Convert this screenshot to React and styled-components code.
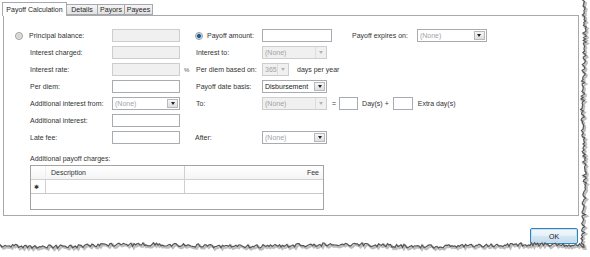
import React from 'react'
import styled, { createGlobalStyle } from 'styled-components'

const GlobalStyle = createGlobalStyle`
    html, body {
        margin: 0;
        padding: 0;
        background: #fff;
    }
    body {
        font-family: "Liberation Sans", Arial, sans-serif;
        font-size: 7px;
        color: #2e2e2e;
    }
`

// styling
    const Canvas = styled.div`
        position: relative;
        width: 590px;
        height: 257px;
        overflow: hidden;
        background: #fff;
    `

    const Dialog = styled.div`
        width: 584px;
        height: 246px;
        box-sizing: border-box;
        padding: 2px 0 0 3px;
        display: flex;
        flex-direction: column;
        background: #fff;
    `

    const TabStrip = styled.div`
        display: flex;
        align-items: flex-end;
        height: 13px;
        position: relative;
        z-index: 1;
    `

    const Tab = styled.div`
        width: ${ p => p.$w }px;
        height: ${ p => p.$active ? 14 : 11 }px;
        margin-bottom: ${ p => p.$active ? -1 : 0 }px;
        margin-left: ${ p => p.$active ? -1 : 0 }px;
        box-sizing: border-box;
        border: 1px solid #a7a9ae;
        border-bottom: ${ p => p.$active ? 'none' : '1px solid #a7a9ae' };
        border-left: ${ p => p.$first || p.$active ? '1px solid #a7a9ae' : 'none' };
        background: ${ p => p.$active ? '#fff' : 'linear-gradient(#f4f4f4, #e2e2e2)' };
        display: flex;
        align-items: center;
        justify-content: center;
        padding-bottom: ${ p => p.$active ? 1 : 0 }px;
        color: #262626;
        white-space: nowrap;
    `

    const TabPanel = styled.div`
        width: 576px;
        height: 201px;
        box-sizing: border-box;
        border: 1px solid #a7a9ae;
        padding: 13px 0 0 11px;
        background: #fff;
    `

    const FormGrid = styled.div`
        display: grid;
        grid-template-columns: 97px 68px 15px 67px 68px 1fr;
        grid-auto-rows: 13px;
        row-gap: 4px;
        align-items: center;
    `

    const Label = styled.div`
        display: flex;
        align-items: center;
        gap: ${ p => p.$gap || 6 }px;
        padding-left: ${ p => p.$indent || 0 }px;
        white-space: nowrap;
        color: #333;
    `

    const Radio = styled.span`
        width: 8px;
        height: 8px;
        box-sizing: border-box;
        border-radius: 50%;
        border: 1px solid #9b9b9b;
        background: ${ p => p.$checked
            ? 'radial-gradient(circle, #1f5d8c 0 1.6px, #8fc0e4 2.2px, #f0f6fb 3px)'
            : 'radial-gradient(circle, #d6d6d6 0 1.5px, #eeeeee 3px)' };
        flex-shrink: 0;
    `

    const Box = styled.div`
        width: ${ p => p.$w || 68 }px;
        height: 13px;
        box-sizing: border-box;
        border: 1px solid ${ p => p.$disabled ? '#cdcdcd' : '#a9abb2' };
        background: ${ p => p.$disabled ? '#f0f0f0' : '#fff' };
        margin-left: ${ p => p.$ml || 0 }px;
        flex-shrink: 0;
    `

    const Combo = styled.div`
        width: ${ p => p.$w || 65 }px;
        height: 13px;
        box-sizing: border-box;
        border: 1px solid ${ p => p.$disabled ? '#cdcdcd' : '#a9abb2' };
        background: ${ p => p.$disabled ? '#f0f0f0' : '#fff' };
        display: flex;
        margin-left: ${ p => p.$ml || 0 }px;
        flex-shrink: 0;
    `

    const ComboText = styled.span`
        flex: 1;
        padding-left: 2px;
        line-height: 11px;
        color: ${ p => p.$dark ? '#1a1a1a' : '#a3a3a3' };
        overflow: hidden;
        white-space: nowrap;
    `

    const ComboArrow = styled.span`
        width: 11px;
        box-sizing: border-box;
        margin: ${ p => p.$disabled ? 0 : 1 }px;
        border: ${ p => p.$disabled ? 'none' : '1px solid #b9b9b9' };
        border-left: 1px solid ${ p => p.$disabled ? '#dcdcdc' : '#b9b9b9' };
        background: ${ p => p.$disabled ? 'transparent' : 'linear-gradient(#f6f6f6, #dedede)' };
        display: flex;
        align-items: center;
        justify-content: center;

        &::after {
            content: '';
            border-left: 2.5px solid transparent;
            border-right: 2.5px solid transparent;
            border-top: 3px solid ${ p => p.$disabled ? '#b4b4b4' : '#202020' };
        }
    `

    const Inline = styled.div`
        display: flex;
        align-items: center;
        white-space: nowrap;
    `

    const Text = styled.span`
        margin-left: ${ p => p.$ml || 0 }px;
        color: #333;
        white-space: nowrap;
    `

    const Percent = styled.span`
        padding-left: 4px;
        color: #555;
        font-size: 6px;
    `

    const ChargesLabel = styled.div`
        margin: 10px 0 0 15px;
        height: 10px;
        line-height: 10px;
        color: #333;
    `

    const ChargesGrid = styled.div`
        margin: 1px 0 0 15px;
        width: 294px;
        height: 45px;
        box-sizing: border-box;
        border: 1px solid #a3a3a3;
        background: #fff;
    `

    const GridRow = styled.div`
        display: grid;
        grid-template-columns: 15px 139px 1fr;
        height: 14px;
        box-sizing: border-box;
        border-bottom: 1px solid ${ p => p.$header ? '#d0d0d0' : '#c8c8c8' };
        background: ${ p => p.$header ? 'linear-gradient(#ffffff, #f4f5f7)' : '#fff' };
    `

    const Cell = styled.div`
        display: flex;
        align-items: center;
        justify-content: ${ p => p.$align || 'flex-start' };
        padding: 0 ${ p => p.$pr || 0 }px 0 ${ p => p.$pl || 0 }px;
        border-right: ${ p => p.$last ? 'none' : `1px solid ${ p.$faint ? '#eeeeee' : '#d0d0d0' }` };
        color: #333;
        white-space: nowrap;
    `

    const NewRowMark = styled.span`
        font-family: "DejaVu Sans", sans-serif;
        font-size: 6px;
        color: #333;
        padding-left: 3px;
    `

    const Footer = styled.div`
        width: 576px;
        display: flex;
        justify-content: flex-end;
        padding: 12px 1px 0 0;
        box-sizing: border-box;
    `

    const OkButton = styled.button`
        width: 48px;
        height: 16px;
        box-sizing: border-box;
        border: 1px solid #3c7fb1;
        border-radius: 2px;
        background: linear-gradient(#f2f8fc 0%, #e4f0f8 50%, #d3e6f3 51%, #c5dcee 100%);
        box-shadow: inset 0 0 0 1px #bfe3f8;
        font-family: "Liberation Sans", Arial, sans-serif;
        font-size: 7px;
        color: #1a1a1a;
        padding: 0;
    `

    const EdgeLayer = styled.svg`
        position: absolute;
        left: 0;
        top: 0;
        pointer-events: none;
    `

const rnd = (i) => {
    const v = Math.sin(i * 12.9898 + 78.233) * 43758.5453
    return v - Math.floor(v)
}

const buildEdge = () => {
    const pts = []
    for (let i = 0, y = 0; y <= 245; i++, y += 1.5) {
        const x = 583.5 + Math.sin(y / 23) * 1.1 + (rnd(i) - 0.5) * 3.6
        pts.push([x, y])
    }
    for (let i = 0, x = 584; x >= -2; i++, x -= 1.5) {
        const y = 245.5 + Math.sin(x / 31) * 1.1 + (rnd(i + 700) - 0.5) * 3.6
        pts.push([x, y])
    }
    return pts
}

const TornEdge = () => {
    const pts = buildEdge()
    const line = pts.map(([x, y], i) => `${ i ? 'L' : 'M' }${ x.toFixed(1) } ${ y.toFixed(1) }`).join(' ')
    const outside = `${ line } L -2 257 L 590 257 L 590 0 Z`
    return (
        <EdgeLayer width="590" height="257" viewBox="0 0 590 257">
            <path d={ outside } fill="#fff" />
            <path d={ line } fill="none" stroke="#bdbdbd" strokeWidth="2.4" transform="translate(1.4 1.6)" />
            <path d={ line } fill="none" stroke="#545454" strokeWidth="1.2" />
        </EdgeLayer>
    )
}

const ComboBox = ({ w, text, disabled, dark, ml }) => (
    <Combo $w={ w } $disabled={ disabled } $ml={ ml }>
        <ComboText $dark={ dark }>{ text }</ComboText>
        <ComboArrow $disabled={ disabled } />
    </Combo>
)

const App = () => {

    return (
        <Canvas>
            <GlobalStyle />
            <Dialog>

                <TabStrip>
                    <Tab $w={ 65 } $active>Payoff Calculation</Tab>
                    <Tab $w={ 31 }>Details</Tab>
                    <Tab $w={ 27 }>Payors</Tab>
                    <Tab $w={ 28 }>Payees</Tab>
                </TabStrip>

                <TabPanel>
                    <FormGrid>

                        <Label><Radio />Principal balance:</Label>
                        <Box $disabled />
                        <span />
                        <Label $gap={ 4 }><Radio $checked />Payoff amount:</Label>
                        <Box $w={ 70 } />
                        <Inline>
                            <Text $ml={ 22 }>Payoff expires on:</Text>
                            <ComboBox w={ 70 } ml={ 9 } text="(None)" />
                        </Inline>

                        <Label $indent={ 15 }>Interest charged:</Label>
                        <Box $disabled />
                        <span />
                        <Label $indent={ 1 }>Interest to:</Label>
                        <ComboBox w={ 65 } text="(None)" disabled />
                        <span />

                        <Label $indent={ 15 }>Interest rate:</Label>
                        <Box $disabled />
                        <Percent>%</Percent>
                        <Label $indent={ 1 }>Per diem based on:</Label>
                        <Inline>
                            <ComboBox w={ 27 } text="365" disabled />
                            <Text $ml={ 8 }>days per year</Text>
                        </Inline>
                        <span />

                        <Label $indent={ 15 }>Per diem:</Label>
                        <Box />
                        <span />
                        <Label $indent={ 1 }>Payoff date basis:</Label>
                        <ComboBox w={ 65 } text="Disbursement" dark />
                        <span />

                        <Label $indent={ 15 }>Additional interest from:</Label>
                        <ComboBox w={ 68 } text="(None)" />
                        <span />
                        <Label $indent={ 1 }>To:</Label>
                        <ComboBox w={ 65 } text="(None)" disabled />
                        <Inline>
                            <Text $ml={ 2 }>=</Text>
                            <Box $w={ 19 } $ml={ 3 } />
                            <Text $ml={ 4 }>Day(s) +</Text>
                            <Box $w={ 20 } $ml={ 4 } />
                            <Text $ml={ 5 }>Extra day(s)</Text>
                        </Inline>

                        <Label $indent={ 15 }>Additional interest:</Label>
                        <Box />
                        <span />
                        <span />
                        <span />
                        <span />

                        <Label $indent={ 15 }>Late fee:</Label>
                        <Box />
                        <span />
                        <Label $indent={ 0 }>After:</Label>
                        <ComboBox w={ 65 } text="(None)" />
                        <span />

                    </FormGrid>

                    <ChargesLabel>Additional payoff charges:</ChargesLabel>
                    <ChargesGrid>
                        <GridRow $header>
                            <Cell $faint />
                            <Cell $pl={ 5 }>Description</Cell>
                            <Cell $last $align="flex-end" $pr={ 4 }>Fee</Cell>
                        </GridRow>
                        <GridRow>
                            <Cell><NewRowMark>✱</NewRowMark></Cell>
                            <Cell />
                            <Cell $last />
                        </GridRow>
                    </ChargesGrid>
                </TabPanel>

                <Footer>
                    <OkButton>OK</OkButton>
                </Footer>

            </Dialog>
            <TornEdge />
        </Canvas>
    )
}

export default App
